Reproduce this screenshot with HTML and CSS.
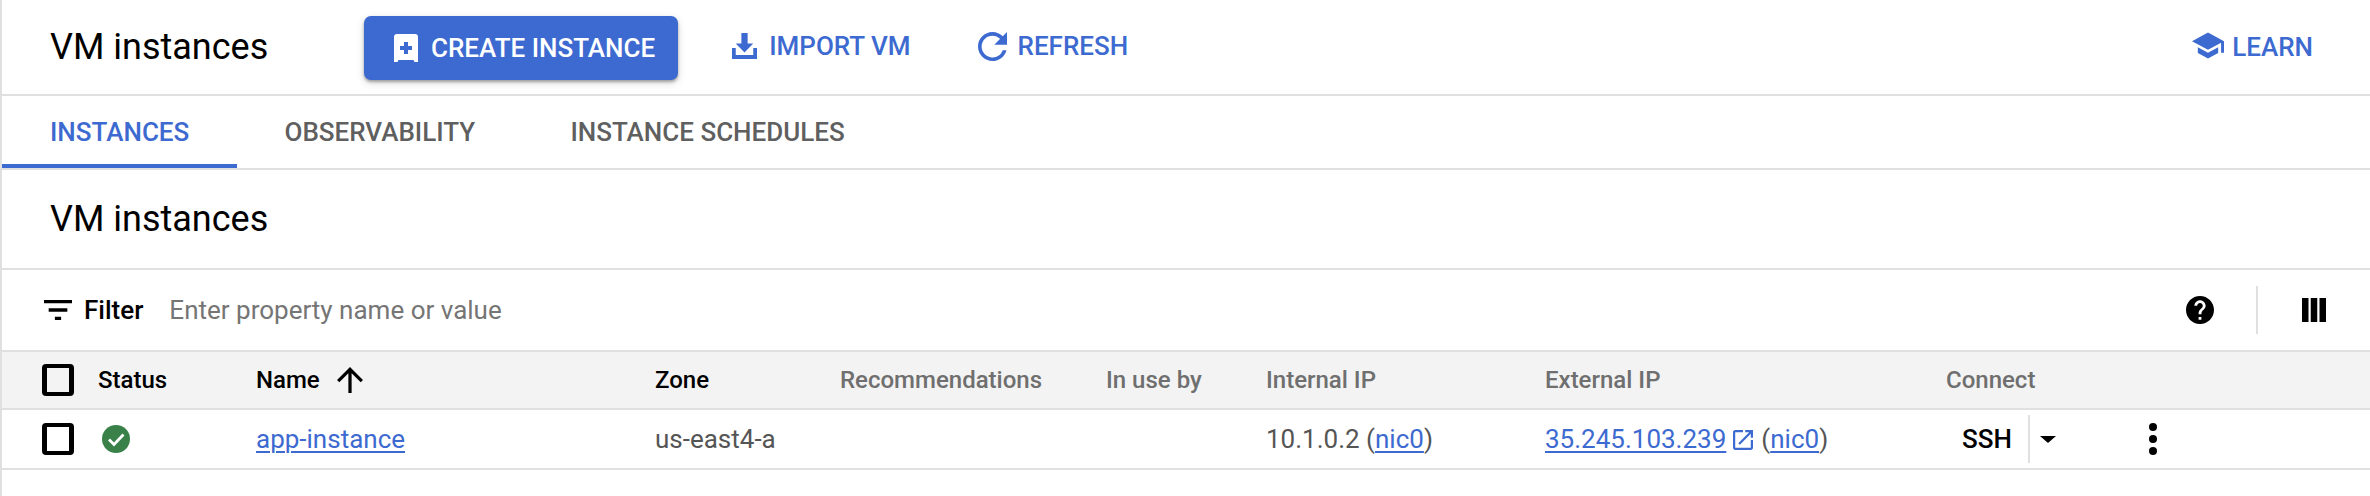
FILE: index.html
```html
<!DOCTYPE html>
<html lang="en">
<head>
  <meta charset="UTF-8" />
  <title>VM instances</title>
  <link rel="stylesheet" href="styles.css">
</head>
<body>

<header class="topbar">
  <h1 class="title title-top">VM instances</h1>
  <button class="btn-create">
    <svg class="ico-create" viewBox="0 0 24 28"><path fill="#fff" d="M3 0h18a3 3 0 0 1 3 3v25h-3.500l-1-2H4.500l-1 2H0V3a3 3 0 0 1 3-3z"/><path fill="#3d6ad0" d="M10 8h4v4h4v4h-4v4h-4v-4H6v-4h4z"/></svg>
    CREATE INSTANCE
  </button>
  <a class="action act-import">
    <svg class="ico-import" viewBox="2 2 20 20" preserveAspectRatio="none"><path d="M9.500 2h5v8h4.500l-7 7-7-7h4.500zM2 13.500h3V19h14v-5.500h3V22H2z"/></svg>
    IMPORT VM
  </a>
  <a class="action act-refresh">
    <svg class="ico-refresh" viewBox="4 4 16 16"><path d="M17.650 6.350C16.200 4.900 14.210 4 12 4c-4.420 0-7.990 3.580-7.990 8s3.570 8 7.990 8c3.730 0 6.840-2.550 7.730-6h-2.080c-.82 2.330-3.040 4-5.650 4-3.310 0-6-2.690-6-6s2.690-6 6-6c1.660 0 3.140.69 4.220 1.780L13 11h7V4l-2.350 2.350z"/></svg>
    REFRESH
  </a>
  <a class="action act-learn">
    <svg class="ico-learn" viewBox="1 3 22 18"><path d="M5 13.180v4L12 21l7-3.820v-4L12 17l-7-3.820zM12 3L1 9l11 6 9-4.910V17h2V9L12 3z"/></svg>
    LEARN
  </a>
</header>

<nav class="tabs">
  <a class="tab active">INSTANCES</a>
  <a class="tab">OBSERVABILITY</a>
  <a class="tab">INSTANCE SCHEDULES</a>
</nav>

<section class="section-head">
  <h2 class="title">VM instances</h2>
</section>

<div class="filterbar">
  <svg class="ico-filter" viewBox="3 6 18 12" preserveAspectRatio="none"><path d="M10 18h4v-2h-4v2zM3 6v2h18V6H3zm3 7h12v-2H6v2z"/></svg>
  <span class="filter-label">Filter</span>
  <span class="filter-hint">Enter property name or value</span>
  <svg class="ico-help" viewBox="2 2 20 20"><path d="M12 2C6.480 2 2 6.480 2 12s4.480 10 10 10 10-4.480 10-10S17.520 2 12 2zm1 17h-2v-2h2v2zm2.070-7.750l-.9.920C13.450 12.900 13 13.500 13 15h-2v-.5c0-1.100.45-2.100 1.170-2.830l1.240-1.260c.37-.36.59-.86.59-1.410 0-1.100-.9-2-2-2s-2 .9-2 2H8c0-2.210 1.790-4 4-4s4 1.790 4 4c0 .88-.36 1.680-.93 2.250z"/></svg>
  <span class="filter-sep"></span>
  <svg class="ico-cols" viewBox="0 0 24 24"><path d="M0 0h6.500v24H0zM8.750 0h6.500v24h-6.500zM17.500 0H24v24h-6.500z"/></svg>
</div>

<div class="row row-head">
  <span class="check"></span>
  <span class="th strong">Status</span>
  <span class="th strong name-head">Name
    <svg class="ico-arrow" viewBox="4 4 16 16"><path d="M4 12l1.410 1.410L11 7.830V20h2V7.830l5.580 5.590L20 12l-8-8-8 8z"/></svg>
  </span>
  <span class="th strong">Zone</span>
  <span class="th">Recommendations</span>
  <span class="th">In use by</span>
  <span class="th">Internal IP</span>
  <span class="th">External IP</span>
  <span class="th">Connect</span>
</div>

<div class="row row-body">
  <span class="check"></span>
  <svg class="ico-ok" viewBox="0 0 28 28"><circle cx="14" cy="14" r="14" fill="#3a8149"/><path d="M7 14.500l5 5 9.500-10" fill="none" stroke="#fff" stroke-width="2.800"/></svg>
  <span class="td"><a class="link">app-instance</a></span>
  <span class="td">us-east4-a</span>
  <span class="td"></span>
  <span class="td"></span>
  <span class="td">10.1.0.2 (<a class="link">nic0</a>)</span>
  <span class="td"><a class="link">35.245.103.239</a><svg class="ico-ext" viewBox="3 3 18 18"><path d="M19 19H5V5h7V3H5c-1.110 0-2 .9-2 2v14c0 1.100.89 2 2 2h14c1.100 0 2-.9 2-2v-7h-2v7zM14 3v2h3.590l-9.830 9.830 1.410 1.410L19 6.410V10h2V3h-7z"/></svg>(<a class="link">nic0</a>)</span>
  <span class="connect">
    <span class="ssh">SSH</span>
    <span class="caret"></span>
    <svg class="ico-more" viewBox="0 0 8 32"><circle cx="4" cy="4" r="4"/><circle cx="4" cy="16" r="4"/><circle cx="4" cy="28" r="4"/></svg>
  </span>
</div>

</body>
</html>
```

FILE: styles.css
```css
html, body {
  height: 496px;
}
body {
  margin: 0;
  overflow: hidden;
  font-family: 'Roboto', sans-serif;
  background: #fff;
  color: #000;
  border-left: 2px solid #e0e0e0;
}
svg {
  display: block;
  flex: none;
}
a {
  color: #3d6ad0;
}

.topbar {
  display: flex;
  align-items: center;
  height: 94px;
  padding: 0 57px 0 48px;
  border-bottom: 2px solid #e0e0e0;
}
.title {
  margin: 0;
  font-size: 36px;
  font-weight: 400;
  line-height: 44px;
}
.title-top {
  width: 314px;
}
.btn-create {
  display: flex;
  align-items: center;
  gap: 13px;
  height: 64px;
  margin-top: 2px;
  padding: 0 23px 0 30px;
  border: none;
  border-radius: 7px;
  background: #3d6ad0;
  color: #fff;
  font-family: inherit;
  font-size: 26px;
  font-weight: 500;
  box-shadow: 0 2px 3px rgba(0, 0, 0, .3), 0 3px 8px rgba(0, 0, 0, .15);
}
.ico-create {
  width: 24px;
  height: 28px;
}
.action {
  display: flex;
  align-items: center;
  font-size: 26px;
  font-weight: 500;
}
.action svg {
  fill: #3d6ad0;
}
.act-import {
  gap: 12px;
  margin-left: 54px;
  margin-bottom: 2px;
}
.ico-import {
  width: 25px;
  height: 26px;
}
.act-refresh {
  gap: 11px;
  margin-left: 67px;
  margin-bottom: 2px;
}
.ico-refresh {
  width: 29px;
  height: 29px;
}
.act-learn {
  gap: 8px;
  margin-left: auto;
}
.ico-learn {
  width: 32px;
  height: 27px;
  margin-bottom: 3px;
}

.tabs {
  display: flex;
  height: 72px;
  border-bottom: 2px solid #e0e0e0;
}
.tab {
  display: flex;
  align-items: center;
  padding: 0 47.600px;
  color: #5f5f5f;
  font-size: 26px;
  font-weight: 500;
}
.tab.active {
  color: #3d6ad0;
  padding-left: 48px;
  box-shadow: inset 0 -4px 0 #3d6ad0;
}

.section-head {
  display: flex;
  align-items: center;
  box-sizing: border-box;
  height: 100px;
  padding-left: 48px;
  border-bottom: 2px solid #e0e0e0;
}

.filterbar {
  display: flex;
  align-items: center;
  height: 80px;
  padding: 0 44px 0 42px;
}
.ico-filter {
  width: 28px;
  height: 20px;
}
.filter-label {
  margin-left: 12px;
  font-size: 26px;
  font-weight: 500;
}
.filter-hint {
  margin-left: 26px;
  color: #757575;
  font-size: 26px;
}
.ico-help {
  width: 28px;
  height: 28px;
  margin-left: auto;
}
.filter-sep {
  width: 2px;
  height: 48px;
  margin: 0 44px 0 42px;
  background: #e0e0e0;
}
.ico-cols {
  width: 24px;
  height: 24px;
}

.row {
  display: grid;
  grid-template-columns: 56px 158px 399px 185px 266px 160px 279px 401px 1fr;
  align-items: center;
  padding-left: 40px;
  font-size: 26px;
}
.row-head {
  height: 56px;
  background: #f3f3f3;
  border-top: 2px solid #e0e0e0;
  border-bottom: 2px solid #e0e0e0;
  font-size: 24px;
}
.row-body {
  height: 58px;
  border-bottom: 2px solid #e0e0e0;
}
.check {
  box-sizing: border-box;
  width: 32px;
  height: 32px;
  border: solid #000;
  border-width: 4px 5px;
  border-radius: 4px;
}
.th {
  color: #6f6f6f;
  font-weight: 500;
}
.th.strong {
  color: #000;
}
.name-head {
  display: flex;
  align-items: center;
  gap: 17px;
}
.ico-arrow {
  width: 26px;
  height: 26px;
}
.ico-ok {
  width: 28px;
  height: 28px;
  margin-left: 4px;
}
.td {
  color: #555;
}
.link {
  text-decoration: underline;
  text-decoration-thickness: 2px;
  text-underline-offset: 3px;
}
.ico-ext {
  display: inline-block;
  width: 20px;
  height: 20px;
  margin: 0 8px 0 7px;
  vertical-align: -2px;
  fill: #3d6ad0;
}
.connect {
  display: flex;
  align-items: center;
  height: 48px;
}
.ssh {
  margin-left: 16px;
  padding-right: 16px;
  line-height: 48px;
  border-right: 2px solid #e0e0e0;
  font-weight: 500;
}
.caret {
  width: 0;
  height: 0;
  margin-left: 10px;
  border-style: solid;
  border-width: 7px 8px 0;
  border-color: #000 transparent transparent;
}
.ico-more {
  width: 8px;
  height: 32px;
  margin-left: 93px;
}
```
